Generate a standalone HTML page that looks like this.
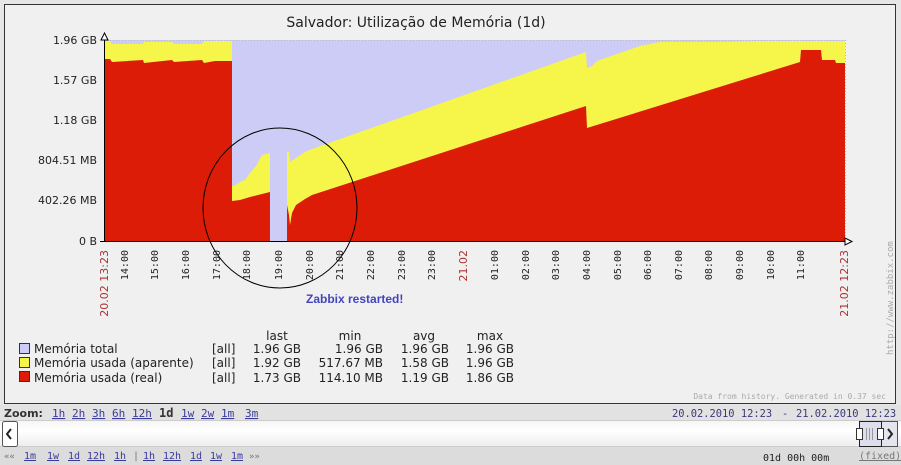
<!DOCTYPE html>
<html><head><meta charset="utf-8"><style>
body{margin:0;width:901px;height:465px;overflow:hidden;background:#e6e6e6;font-family:"DejaVu Sans","Liberation Sans",sans-serif;}
</style></head><body>
<svg width="901" height="465" style="position:absolute;left:0;top:0" font-family="DejaVu Sans, Liberation Sans, sans-serif">
<rect x="0" y="0" width="901" height="465" fill="#e6e6e6"/>
<rect x="4.5" y="4.5" width="891" height="399" fill="#f0f0f0" stroke="#333" stroke-width="1"/>
<text x="416" y="27" font-size="14" fill="#222" text-anchor="middle">Salvador: Utilização de Memória  (1d)</text>
<rect x="104" y="40" width="741" height="201" fill="#ccccf6"/>
<polygon fill="#f6f64a" points="104,41 110,41 112,44 143,44 144,42 172,42 173,43 174,44 202,44 204,41 232,41 232,186 234,186 240,182 245,180 250,173 256,166 262,155 270,153 270,241 104,241"/>
<polygon fill="#f6f64a" points="287,152 289,152 290,162 296,158 305,152 312,149 586,52 587,68 592,66 597,61 640,46 660,42 700,42 720,42 760,41 800,41 845,41 845,241 287,241"/>
<polygon fill="#dd1c08" points="104,59 110,59 112,62 143,60 144,63 172,60 174,62 202,60 204,63 215,61 232,61 232,201 240,200 250,197 262,194 270,192 270,241 104,241"/>
<polygon fill="#dd1c08" points="287,205 289,215 290,225 292,213 296,205 305,199 312,195 586,106 587,128 800,62 801,50 821,50 822,60 835,60 836,63 845,63 845,241 287,241"/>
<g stroke="#bbb" stroke-dasharray="1,2" stroke-width="1">
<line x1="104" y1="40.5" x2="845" y2="40.5"/><line x1="845.5" y1="40" x2="845.5" y2="241"/>
</g>
<line x1="104.5" y1="33" x2="104.5" y2="241" stroke="#000"/>
<polygon points="101,40 104.5,33 108,40" fill="#fff" stroke="#000"/>
<line x1="100" y1="241.5" x2="852" y2="241.5" stroke="#000"/>
<polygon points="845,238 852,241.5 845,245" fill="#fff" stroke="#000"/>
<ellipse cx="280" cy="208" rx="77" ry="80" fill="none" stroke="#000" stroke-width="1"/>
<g font-size="11" fill="#222" text-anchor="end">
<text x="97" y="44">1.96 GB</text><text x="97" y="84">1.57 GB</text><text x="97" y="124">1.18 GB</text>
<text x="97" y="164">804.51 MB</text><text x="97" y="204">402.26 MB</text><text x="97" y="245">0 B</text>
</g>
<g font-size="10" fill="#222" text-anchor="end" font-family="DejaVu Sans Mono, Liberation Mono, monospace">
<text transform="translate(128,250) rotate(-90)">14:00</text>
<text transform="translate(158,250) rotate(-90)">15:00</text>
<text transform="translate(189,250) rotate(-90)">16:00</text>
<text transform="translate(220,250) rotate(-90)">17:00</text>
<text transform="translate(250,250) rotate(-90)">18:00</text>
<text transform="translate(282,250) rotate(-90)">19:00</text>
<text transform="translate(313,250) rotate(-90)">20:00</text>
<text transform="translate(343,250) rotate(-90)">21:00</text>
<text transform="translate(374,250) rotate(-90)">22:00</text>
<text transform="translate(405,250) rotate(-90)">23:00</text>
<text transform="translate(435,250) rotate(-90)">23:00</text>
<text transform="translate(498,250) rotate(-90)">01:00</text>
<text transform="translate(529,250) rotate(-90)">02:00</text>
<text transform="translate(559,250) rotate(-90)">03:00</text>
<text transform="translate(590,250) rotate(-90)">04:00</text>
<text transform="translate(621,250) rotate(-90)">05:00</text>
<text transform="translate(651,250) rotate(-90)">06:00</text>
<text transform="translate(682,250) rotate(-90)">07:00</text>
<text transform="translate(712,250) rotate(-90)">08:00</text>
<text transform="translate(743,250) rotate(-90)">09:00</text>
<text transform="translate(774,250) rotate(-90)">10:00</text>
<text transform="translate(804,250) rotate(-90)">11:00</text>
</g>
<g font-size="11" fill="#a33" text-anchor="end">
<text transform="translate(108,250) rotate(-90)">20.02 13:23</text>
<text transform="translate(467,250) rotate(-90)">21.02</text>
<text transform="translate(848,250) rotate(-90)">21.02 12:23</text>
</g>
<text transform="translate(893,355) rotate(-90)" font-size="9" fill="#aaa" font-family="DejaVu Sans Mono, monospace">http://www.zabbix.com</text>
<text x="306" y="303" font-size="12" font-weight="bold" fill="#4444bb" font-family="Liberation Sans, sans-serif">Zabbix restarted!</text>
<g font-size="12" fill="#222">
<text x="277" y="340" text-anchor="middle">last</text><text x="350" y="340" text-anchor="middle">min</text>
<text x="424" y="340" text-anchor="middle">avg</text><text x="490" y="340" text-anchor="middle">max</text>
<rect x="19.5" y="343.5" width="10" height="10" fill="#ccccf6" stroke="#333"/>
<rect x="19.5" y="357.5" width="10" height="10" fill="#f6f64a" stroke="#333"/>
<rect x="19.5" y="371.5" width="10" height="10" fill="#dd1c08" stroke="#333"/>
<text x="34" y="353">Memória total</text><text x="34" y="367">Memória usada (aparente)</text><text x="34" y="382">Memória usada (real)</text>
<text x="212" y="353">[all]</text><text x="212" y="367">[all]</text><text x="212" y="382">[all]</text>
<g text-anchor="end">
<text x="301" y="353">1.96 GB</text><text x="301" y="367">1.92 GB</text><text x="301" y="382">1.73 GB</text>
<text x="383" y="353">1.96 GB</text><text x="383" y="367">517.67 MB</text><text x="383" y="382">114.10 MB</text>
<text x="449" y="353">1.96 GB</text><text x="449" y="367">1.58 GB</text><text x="449" y="382">1.19 GB</text>
<text x="514" y="353">1.96 GB</text><text x="514" y="367">1.96 GB</text><text x="514" y="382">1.86 GB</text>
</g></g>
<text x="886" y="399" font-size="8" fill="#aaa" text-anchor="end" font-family="DejaVu Sans Mono, monospace">Data from history. Generated in 0.37 sec</text>
<rect x="0" y="405" width="901" height="15" fill="#e2e2e2"/>
<defs><linearGradient id="g" x1="0" y1="0" x2="0" y2="1"><stop offset="0" stop-color="#f4f4f4"/><stop offset="0.4" stop-color="#fff"/><stop offset="1" stop-color="#ececec"/></linearGradient></defs>
<rect x="0" y="420" width="901" height="27" fill="url(#g)"/>
<line x1="0" y1="420.5" x2="901" y2="420.5" stroke="#ccc"/><line x1="0" y1="446.5" x2="901" y2="446.5" stroke="#ccc"/>
<rect x="2.5" y="421.5" width="15" height="25" rx="2" fill="#fff" stroke="#555"/>
<path d="M11,429 L7,434 L11,439" fill="none" stroke="#222" stroke-width="2"/>
<rect x="859.5" y="421.5" width="38" height="25" fill="#e4e4ee" stroke="#555"/>
<rect x="859.5" y="421.5" width="22" height="25" fill="#dde" stroke="#222"/>
<rect x="856.5" y="428.5" width="6" height="11" fill="#fff" stroke="#333"/>
<rect x="877.5" y="428.5" width="6" height="11" fill="#fff" stroke="#333"/>
<g stroke="#999"><line x1="866.5" y1="428" x2="866.5" y2="440"/><line x1="869.5" y1="428" x2="869.5" y2="440"/><line x1="872.5" y1="428" x2="872.5" y2="440"/></g>
<path d="M888,429 L892,434 L888,439" fill="none" stroke="#222" stroke-width="2"/>
<rect x="0" y="447" width="901" height="18" fill="#dcdcdc"/>
<g font-size="11" font-family="DejaVu Sans Mono, monospace">
<text x="4" y="417" font-weight="bold" fill="#333" font-family="DejaVu Sans, sans-serif">Zoom:</text>
<g fill="#3a3a9a" text-decoration="underline">
<text x="52" y="417">1h</text><text x="72" y="417">2h</text><text x="92" y="417">3h</text><text x="112" y="417">6h</text><text x="132" y="417">12h</text>
<text x="181" y="417">1w</text><text x="201" y="417">2w</text><text x="221" y="417">1m</text><text x="245" y="417">3m</text>
</g>
<text x="159" y="417" font-weight="bold" fill="#333" font-size="12">1d</text>
<text x="672" y="417" fill="#3a3a7a" font-size="10.4">20.02.2010 12:23</text>
<text x="782" y="417" fill="#3a3a7a" font-size="10.4">-</text>
<text x="796" y="417" fill="#3a3a7a" font-size="10.4">21.02.2010 12:23</text>
<text x="4" y="459" fill="#777" font-size="9">««</text>
<g fill="#3a3a9a" text-decoration="underline" font-size="10">
<text x="24" y="459">1m</text><text x="47" y="459">1w</text><text x="68" y="459">1d</text><text x="87" y="459">12h</text><text x="114" y="459">1h</text>
<text x="143" y="459">1h</text><text x="163" y="459">12h</text><text x="190" y="459">1d</text><text x="210" y="459">1w</text><text x="231" y="459">1m</text>
</g>
<text x="133" y="459" fill="#777" font-size="10">|</text>
<text x="249" y="459" fill="#777" font-size="9">»»</text>
<text x="763" y="461" fill="#222" font-size="10">01d 00h 00m</text>
<text x="859" y="459" fill="#777" font-size="10" text-decoration="underline">(fixed)</text>
</g>
</svg>
</body></html>
